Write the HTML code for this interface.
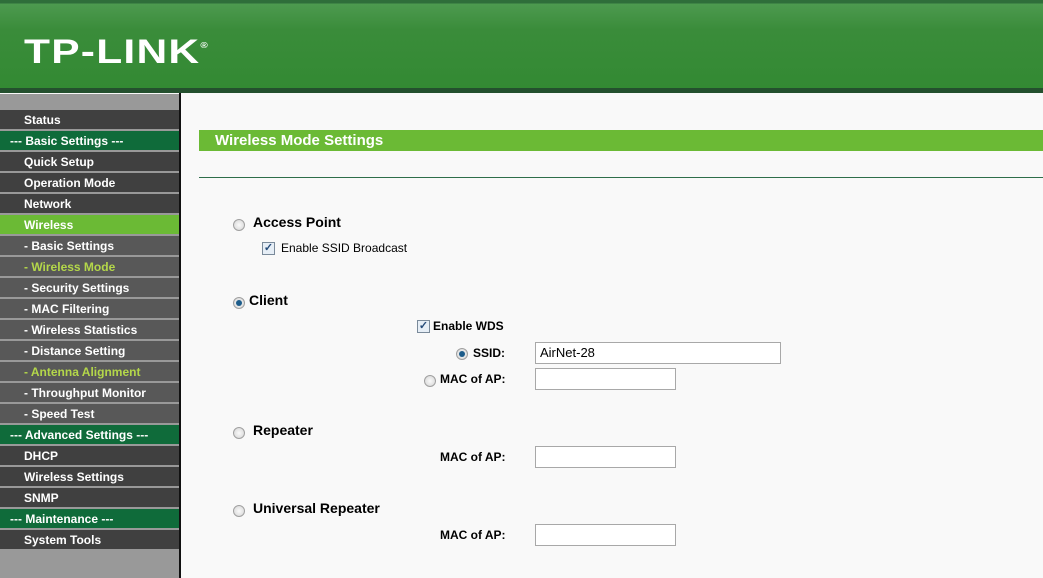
<!DOCTYPE html>
<html><head><meta charset="utf-8"><style>
*{margin:0;padding:0;box-sizing:border-box}
body{width:1043px;height:578px;overflow:hidden;font-family:"Liberation Sans",Arial,sans-serif;background:#f9f9f9;position:relative}
#hdr{position:absolute;left:0;top:0;width:1043px;height:88px;background:linear-gradient(#2f6e3a 0,#2f6e3a 3px,#4d9a4f 4px,#3a8c3a 30px,#338a33 88px)}
#hdr .band{position:absolute;left:0;top:88px;width:1043px;height:5px;background:#24502e}
#logo{position:absolute;left:24px;top:33px;color:#fff;font-weight:bold;font-size:34px;letter-spacing:1px;font-family:"Liberation Sans",sans-serif;transform:scaleX(1.25);transform-origin:left;white-space:nowrap}
#logo sup{font-size:8px;vertical-align:top;position:relative;top:8px;letter-spacing:0}
#side{position:absolute;left:0;top:94px;width:179px;height:484px;background:#999}
#vline{position:absolute;left:179px;top:93px;width:2px;height:485px;background:#111}
.it{position:absolute;left:0;width:179px;height:19px;background:#404040;color:#fff;font-weight:bold;font-size:12px;line-height:21px;padding-left:24px}
.sub{background:#585858}
.sec{background:#0f6b3a;padding-left:10px}
.act{background:#6bba35}
.y{color:#b4d74a}
#title{position:absolute;left:199px;top:130px;width:844px;height:21px;background:#6bba35;color:#fff;font-weight:bold;font-size:15px;line-height:22px;padding-left:16px}
#hl{position:absolute;left:199px;top:177px;width:844px;height:1px;background:#2e6e4a}
.r{position:absolute;width:12px;height:12px;border-radius:50%;border:1px solid #a0a0a0;background:radial-gradient(#fafafa,#d4d4d4)}
.r.on::after{content:"";position:absolute;left:2px;top:2px;width:6px;height:6px;border-radius:50%;background:#1c5c8a}
.c{position:absolute;width:13px;height:13px;border:1px solid #7a8a9a;background:#e6eef6;font-size:11px;line-height:11px;text-align:center;color:#264c7a;font-weight:bold}
.t{position:absolute;font-size:12px;color:#000}
.b{font-weight:bold}
.big{font-size:14px;font-weight:bold}
.in{position:absolute;height:22px;border:1px solid #a8a8a8;background:#fff;font-size:13px;line-height:20px;padding-left:4px}
</style></head><body>
<div id="hdr"><div id="logo">TP-LINK<sup>®</sup></div><div class="band"></div></div>
<div id="side">
<div class="it" style="top:16px">Status</div>
<div class="it sec" style="top:37px">--- Basic Settings ---</div>
<div class="it" style="top:58px">Quick Setup</div>
<div class="it" style="top:79px">Operation Mode</div>
<div class="it" style="top:100px">Network</div>
<div class="it act" style="top:121px">Wireless</div>
<div class="it sub" style="top:142px">- Basic Settings</div>
<div class="it sub y" style="top:163px">- Wireless Mode</div>
<div class="it sub" style="top:184px">- Security Settings</div>
<div class="it sub" style="top:205px">- MAC Filtering</div>
<div class="it sub" style="top:226px">- Wireless Statistics</div>
<div class="it sub" style="top:247px">- Distance Setting</div>
<div class="it sub y" style="top:268px">- Antenna Alignment</div>
<div class="it sub" style="top:289px">- Throughput Monitor</div>
<div class="it sub" style="top:310px">- Speed Test</div>
<div class="it sec" style="top:331px">--- Advanced Settings ---</div>
<div class="it" style="top:352px">DHCP</div>
<div class="it" style="top:373px">Wireless Settings</div>
<div class="it" style="top:394px">SNMP</div>
<div class="it sec" style="top:415px">--- Maintenance ---</div>
<div class="it" style="top:436px">System Tools</div>
</div>
<div id="vline"></div>
<div id="title">Wireless Mode Settings</div>
<div id="hl"></div>

<div class="r" style="left:233px;top:219px"></div>
<div class="t big" style="left:253px;top:214px">Access Point</div>
<div class="c" style="left:262px;top:242px">✓</div>
<div class="t" style="left:281px;top:241px">Enable SSID Broadcast</div>

<div class="r on" style="left:233px;top:297px"></div>
<div class="t big" style="left:249px;top:292px">Client</div>
<div class="c" style="left:417px;top:320px">✓</div>
<div class="t b" style="left:433px;top:319px">Enable WDS</div>
<div class="r on" style="left:456px;top:348px"></div>
<div class="t b" style="left:473px;top:346px">SSID:</div>
<div class="in" style="left:535px;top:342px;width:246px">AirNet-28</div>
<div class="r" style="left:424px;top:375px"></div>
<div class="t b" style="left:440px;top:372px">MAC of AP:</div>
<div class="in" style="left:535px;top:368px;width:141px"></div>

<div class="r" style="left:233px;top:427px"></div>
<div class="t big" style="left:253px;top:422px">Repeater</div>
<div class="t b" style="left:440px;top:450px">MAC of AP:</div>
<div class="in" style="left:535px;top:446px;width:141px"></div>

<div class="r" style="left:233px;top:505px"></div>
<div class="t big" style="left:253px;top:500px">Universal Repeater</div>
<div class="t b" style="left:440px;top:528px">MAC of AP:</div>
<div class="in" style="left:535px;top:524px;width:141px"></div>
</body></html>
